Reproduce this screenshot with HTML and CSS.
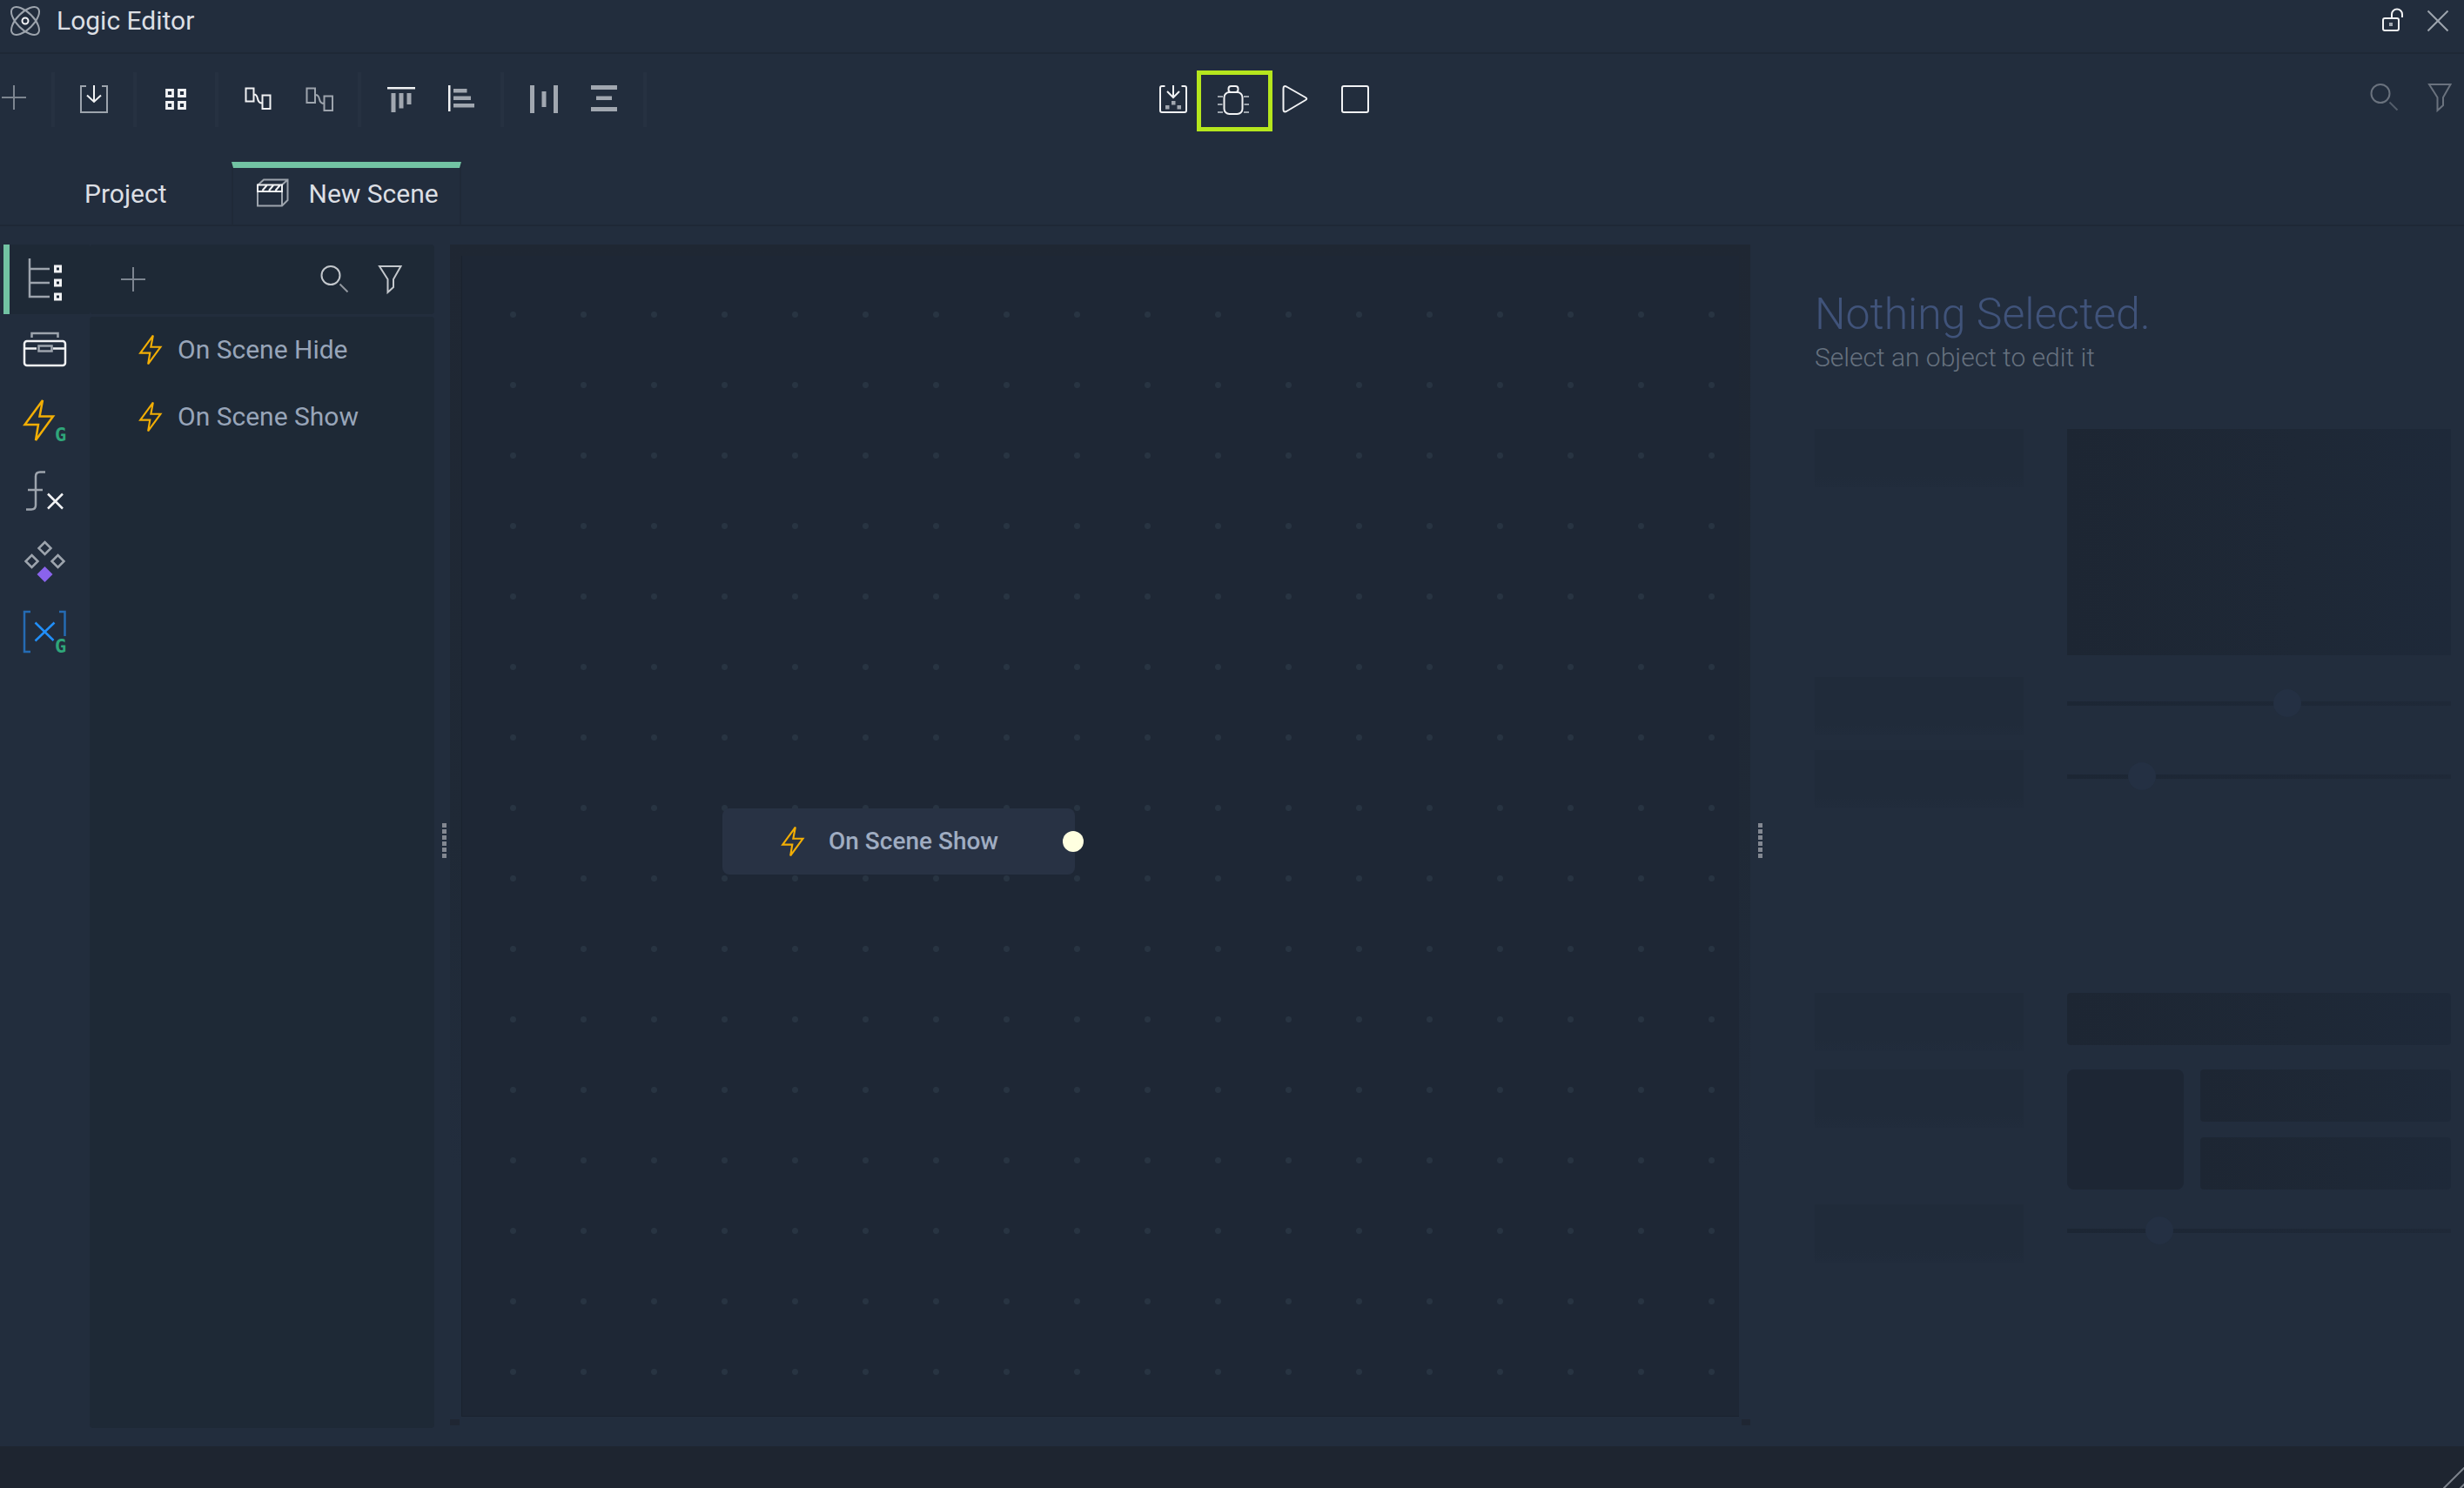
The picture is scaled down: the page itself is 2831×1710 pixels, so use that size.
FILE: index.html
```html
<!DOCTYPE html>
<html lang="en">
<head>
<meta charset="utf-8">
<title>Logic Editor</title>
<link rel="stylesheet" href="styles.css">
</head>
<body>
<svg class="symbols" aria-hidden="true">
  <symbol id="plus" viewBox="0 0 48 48"><path d="M10 24h28M24 10v28"/></symbol>
  <symbol id="search" viewBox="0 0 48 48"><circle cx="20" cy="19.500" r="10.500"/><path d="M30.500 29.500l9 9" opacity=".7"/></symbol>
  <symbol id="filter" viewBox="0 0 48 48"><path d="M12 9h24.500l-8.500 15v9l-6.500 6V24z"/></symbol>
  <symbol id="bolt" viewBox="0 0 56 56"><path d="M25 5L4.500 33H20l-3 18 20-27.500H21.500z"/></symbol>
</svg>

<div class="app">
  <header class="titlebar">
    <svg class="icon dim" viewBox="0 0 48 48" aria-hidden="true">
      <ellipse cx="24" cy="24" rx="20.500" ry="9.500" transform="rotate(45 24 24)"/>
      <ellipse cx="24" cy="24" rx="20.500" ry="9.500" transform="rotate(-45 24 24)"/>
      <circle class="lit" cx="24" cy="24" r="3.500"/>
    </svg>
    <h1 class="app-name">Logic Editor</h1>
    <div class="window-controls">
      <button class="win-button" type="button" aria-label="Unlock">
        <svg class="icon lit" viewBox="0 0 48 48"><rect x="13" y="21" width="18" height="14" rx="2"/><path d="M23 20v-3.500a6 6 0 0 1 12 0V20"/><rect class="solid-dim" x="20" y="26" width="4" height="4"/></svg>
      </button>
      <button class="win-button" type="button" aria-label="Close">
        <svg class="icon dim" viewBox="0 0 48 48"><path d="M12.500 12.500l23 23M35.500 12.500l-23 23"/></svg>
      </button>
    </div>
  </header>

  <div class="toolbar">
    <div class="tools tools-left">
      <button class="tool tool-add" type="button" aria-label="Add"><svg class="icon muted"><use href="#plus"/></svg></button>
      <span class="separator"></span>
      <button class="tool" type="button" aria-label="Import">
        <svg class="icon dim" viewBox="0 0 48 48"><path d="M15 8H9v30h30V8h-6"/><path class="lit" d="M24 7v19M16 18.500l8 7.500 8-7.500"/></svg>
      </button>
      <span class="separator"></span>
      <button class="tool" type="button" aria-label="Grid">
        <svg class="icon lit" viewBox="0 0 48 48"><path stroke-width="2.800" d="M13.500 12.500h7v7h-7zM27.500 12.500h7v7h-7zM13.500 26.500h7v7h-7zM27.500 26.500h7v7h-7z"/></svg>
      </button>
      <span class="separator"></span>
      <button class="tool" type="button" aria-label="Connect">
        <svg class="icon lit" viewBox="0 0 48 48"><path d="M10.500 10.500h9v15h-9zM29.500 18.500h9v15.500h-9zM20 17.500q3 0 4 5t5 5"/></svg>
      </button>
      <button class="tool" type="button" aria-label="Disconnect">
        <svg class="icon dim" viewBox="0 0 48 48"><path d="M10.500 10.500h9.500v16.500H10.500zM30.500 19.500H40V36h-9.500zM20.500 18q3.500 0 4.500 5t5.500 5"/></svg>
      </button>
      <span class="separator"></span>
      <button class="tool" type="button" aria-label="Align top">
        <svg class="icon solid" viewBox="0 0 48 48"><path class="solid-lit" d="M9 9h32v2.500H9z"/><path d="M13.500 16h5v22h-5zM22.500 16h5v17.500h-5zM31.500 16h5v13h-5z"/></svg>
      </button>
      <button class="tool" type="button" aria-label="Align left">
        <svg class="icon solid" viewBox="0 0 48 48"><path class="solid-lit" d="M9 7h2.500v30H9z"/><path d="M15 11h15.500v4.500H15zM15 19.500h20V24H15zM15 28h24v4.500H15z"/></svg>
      </button>
      <span class="separator"></span>
      <button class="tool" type="button" aria-label="Distribute horizontally">
        <svg class="icon solid" viewBox="0 0 48 48"><path d="M9 7h5v32H9zM22.500 14h5v18h-5zM36 7h5v32h-5z"/></svg>
      </button>
      <button class="tool" type="button" aria-label="Distribute vertically">
        <svg class="icon solid" viewBox="0 0 48 48"><path d="M9 7h30v5H9zM15 19.500h18V24H15zM9 32h30v5H9z"/></svg>
      </button>
      <span class="separator"></span>
    </div>
    <div class="tools">
      <button class="tool" type="button" aria-label="Build">
        <svg class="icon lit" viewBox="0 0 48 48"><path d="M14.500 8H11q-2 0-2 2v26q0 2 2 2h26q2 0 2-2V10q0-2-2-2h-3.500M24 7v13.500M17 14l7 7 7-7"/><path class="solid-dim" d="M22 25h4.500v4.500H22zM15 30h4.500v4.500H15zM28.500 30H33v4.500h-4.500z"/></svg>
      </button>
      <button class="tool tool-marked" type="button" aria-label="Debug">
        <svg class="icon lit" viewBox="0 0 48 48"><rect x="12.500" y="15" width="21" height="25" rx="6"/><rect x="17.500" y="8" width="11" height="7" rx="3"/><path class="dim" d="M5 20h6M5 29h5.500M5 38h6M35 20h6M35.500 29H41M35 38h6"/></svg>
      </button>
      <button class="tool" type="button" aria-label="Play">
        <svg class="icon lit" viewBox="0 0 48 48"><path stroke-linejoin="round" d="M10.500 11v23.500q0 4 3.500 2.500l22-13q2.500-1.500 0-3l-22-12.500q-3.500-1.500-3.500 2.500z"/></svg>
      </button>
      <button class="tool" type="button" aria-label="Stop">
        <svg class="icon lit" viewBox="0 0 48 48"><rect x="8" y="8" width="30" height="30" rx="2"/></svg>
      </button>
    </div>
    <div class="tools tools-right">
      <button class="tool tool-small" type="button" aria-label="Search"><svg class="icon faint"><use href="#search"/></svg></button>
      <button class="tool tool-small" type="button" aria-label="Filter"><svg class="icon faint"><use href="#filter"/></svg></button>
    </div>
  </div>

  <nav class="tabs">
    <a class="tab" href="#project">Project</a>
    <a class="tab tab-active" href="#scene" aria-current="page">
      <svg class="icon dim" viewBox="0 0 48 48" aria-hidden="true"><path d="M7 14l7-6.500h27.500V31L35 37.500H7V14M35 13.500l6.500-6M35 21v16.500"/><path class="lit" d="M7 13.500h28V21H7zM12.500 20l5-6M20 20l5-6M27.500 20l5-6"/></svg>
      New Scene
    </a>
  </nav>

  <main class="workspace">
    <nav class="rail" aria-label="Sections">
      <button class="rail-item rail-active" type="button" aria-label="Hierarchy">
        <svg class="rail-icon dim" viewBox="0 0 56 56"><path d="M10 4v44h23M10 16h23M10 32h23"/><path class="lit" stroke-width="3" d="M39.500 13h6v6h-6zM39.500 29h6v6h-6zM39.500 45h6v6h-6z"/></svg>
      </button>
      <button class="rail-item" type="button" aria-label="Toolbox">
        <svg class="rail-icon lit" viewBox="0 0 56 56"><rect x="4" y="18" width="47" height="28" rx="3"/><path d="M4 26.500h14M37 26.500h14"/><path class="dim" d="M20.500 23.500h15v6h-15zM12.500 14V9h30v5"/></svg>
      </button>
      <button class="rail-item" type="button" aria-label="Global events">
        <svg class="rail-icon" viewBox="0 0 56 56"><path class="amber" d="M25 5L4.500 33H20l-3 18 20-27.500H21.500z"/><text class="badge" x="39" y="52">G</text></svg>
      </button>
      <button class="rail-item" type="button" aria-label="Functions">
        <svg class="rail-icon dim" viewBox="0 0 56 56"><path d="M28 6.500h-6q-5 0-5 5v33q0 5-5 5H6M8 27h17"/><path class="lit" d="M31 31.500l17 17M48 31.500l-17 17"/></svg>
      </button>
      <button class="rail-item" type="button" aria-label="Components">
        <svg class="rail-icon dim" viewBox="0 0 56 56"><path d="M27.500 6l7 7-7 7-7-7zM12.500 21l7 7-7 7-7-7zM42.500 21l7 7-7 7-7-7z"/><path class="violet" d="M27.500 34l9 9-9 9-9-9z"/></svg>
      </button>
      <button class="rail-item" type="button" aria-label="Global variables">
        <svg class="rail-icon" viewBox="0 0 56 56"><path class="navy" d="M11 5H4v46h7M44 5h6.500v28"/><path class="azure" d="M16.500 17.500l21 20.500M38.500 17.500l-22 21"/><text class="badge" x="39" y="52">G</text></svg>
      </button>
    </nav>

    <section class="panel" aria-label="Events">
      <div class="panel-head">
        <button class="panel-tool" type="button" aria-label="Add event"><svg class="icon muted"><use href="#plus"/></svg></button>
        <div class="panel-tools">
          <button class="panel-tool" type="button" aria-label="Search events"><svg class="icon soft"><use href="#search"/></svg></button>
          <button class="panel-tool" type="button" aria-label="Filter events"><svg class="icon soft"><use href="#filter"/></svg></button>
        </div>
      </div>
      <ul class="event-list">
        <li class="event"><svg class="bolt amber" aria-hidden="true"><use href="#bolt"/></svg>On Scene Hide</li>
        <li class="event"><svg class="bolt amber" aria-hidden="true"><use href="#bolt"/></svg>On Scene Show</li>
      </ul>
    </section>

    <div class="splitter splitter-left"><span class="grip"></span></div>

    <section class="canvas-frame" aria-label="Graph">
      <div class="canvas">
        <div class="node">
          <svg class="bolt amber" aria-hidden="true"><use href="#bolt"/></svg>
          On Scene Show
          <span class="port"></span>
        </div>
      </div>
    </section>

    <div class="splitter splitter-right"><span class="grip"></span></div>

    <aside class="inspector">
      <h2 class="inspector-title">Nothing Selected.</h2>
      <p class="inspector-hint">Select an object to edit it</p>
      <div class="skeleton">
        <div class="skeleton-row row-preview"><span class="ghost-label"></span><span class="ghost-field ghost-preview"></span></div>
        <div class="skeleton-row"><span class="ghost-label"></span><input class="ghost-slider" type="range" value="58" disabled aria-label="Value"></div>
        <div class="skeleton-row"><span class="ghost-label"></span><input class="ghost-slider" type="range" value="17" disabled aria-label="Value"></div>
      </div>
      <div class="skeleton skeleton-second">
        <div class="skeleton-row row-field"><span class="ghost-label"></span><span class="ghost-field"></span></div>
        <div class="skeleton-row"><span class="ghost-label"></span>
          <div class="ghost-group"><span class="ghost-field ghost-tile"></span><span class="ghost-field"></span><span class="ghost-field"></span></div>
        </div>
        <div class="skeleton-row"><span class="ghost-label"></span><input class="ghost-slider" type="range" value="22" disabled aria-label="Value"></div>
      </div>
    </aside>
  </main>

  <footer class="statusbar">
    <svg class="resize" viewBox="0 0 24 24" aria-hidden="true"><path d="M0 25L25 0M19 25l6-6"/></svg>
  </footer>
</div>
</body>
</html>
```
FILE: styles.css
```css
* { box-sizing: border-box; }

body {
  margin: 0;
  background: #222d3d;
  color: #dcdfe4;
  font: 400 30px/40px Roboto, "Liberation Sans", sans-serif;
}

button {
  padding: 0;
  border: 0;
  background: none;
  color: inherit;
  font: inherit;
}

h1, h2, p, ul { margin: 0; padding: 0; }

.symbols { position: absolute; width: 0; height: 0; }

.app {
  display: flex;
  flex-direction: column;
  min-height: 100vh;
}

/* Icons */
.icon { display: block; flex: none; width: 48px; height: 48px; fill: none; stroke-width: 2; }
.rail-icon { display: block; width: 56px; height: 56px; fill: none; stroke-width: 2.5; }
.bolt { flex: none; width: 40px; height: 40px; fill: none; stroke-width: 3; }
.lit { stroke: #f1f2f4; }
.soft { stroke: #c3c7cc; }
.dim { stroke: #9da4ad; }
.muted { stroke: #7d8590; }
.faint { stroke: #6a727e; }
.solid { fill: #a1a7b0; }
.solid-lit { fill: #f1f2f4; }
.solid-dim { fill: #a1a7b0; stroke: none; }
.amber { stroke: #f2ae05; }
.violet { fill: #8a63ec; stroke: none; }
.navy { stroke: #256bb3; }
.azure { stroke: #218ffa; }
.badge { fill: #2fa67a; font: 700 22px "DejaVu Sans Mono", monospace; }

/* Title bar */
.titlebar {
  display: flex;
  align-items: center;
  gap: 12px;
  height: 62px;
  padding: 0 4px 12px 5px;
  border-bottom: 2px solid #1e2836;
}
.app-name { font-size: 30px; font-weight: 400; }
.window-controls { display: flex; margin-left: auto; }
.win-button { display: grid; place-items: center; width: 52px; height: 48px; }

/* Toolbar */
.toolbar { display: flex; height: 124px; padding-top: 21px; }
.tools { display: flex; align-items: flex-start; }
.tools-left { flex: 35 1 0; }
.tools-right { flex: 33 1 0; justify-content: flex-end; gap: 8px; }
.tool { display: grid; place-items: center; flex: none; width: 70px; height: 64px; }
.tool-add { width: 48px; height: 58px; margin: 0 9px 0 -8px; }
.tool-small { width: 56px; height: 58px; }
.separator { flex: none; width: 4px; height: 63px; margin: 0 10px; background: #263141; }
.tool-marked { position: relative; }
.tool-marked::after {
  content: "";
  position: absolute;
  inset: -2px -9px -4px -8px;
  border: 5px solid #b5e61d;
}

/* Tabs */
.tabs { display: flex; height: 74px; border-bottom: 2px solid #1e2836; }
.tab {
  display: flex;
  align-items: center;
  gap: 18px;
  padding: 7px 74px 6px 97px;
  color: inherit;
  text-decoration: none;
}
.tab-active {
  padding: 0 24px 6px 21px;
  border: solid #1f2938;
  border-width: 7px 2px 0;
  border-top-color: #72c3a3;
}

/* Workspace */
.workspace { display: flex; flex: 1; padding: 21px 0; }

.rail { display: flex; flex: none; flex-direction: column; gap: 1px; width: 103px; }
.rail-item { display: flex; align-items: center; height: 80px; padding-left: 24px; }
.rail-active {
  margin-left: 4px;
  padding-left: 13px;
  border-left: 7px solid #72c3a3;
  background: #1e2936;
}

.panel { display: flex; flex: none; flex-direction: column; gap: 3px; width: 396px; }
.panel-head {
  display: flex;
  align-items: center;
  justify-content: space-between;
  height: 80px;
  padding: 0 23px 0 22px;
  border-radius: 4px;
  background: #1e2936;
}
.panel-tools { display: flex; gap: 8px; }
.panel-tool { display: grid; place-items: center; width: 56px; height: 56px; }
.event-list { flex: 1; border-radius: 4px; background: #1e2936; list-style: none; }
.event { display: flex; align-items: center; gap: 6px; height: 77px; padding: 0 0 2px 55px; color: #98a5b9; }

.splitter { display: grid; flex: none; place-items: center; padding-top: 10px; }
.splitter-left { width: 18px; padding-left: 4px; }
.splitter-right { width: 22px; }
.grip {
  width: 5px;
  height: 40px;
  background: repeating-linear-gradient(#838892 0 5px, transparent 5px 7px);
}

.canvas-frame {
  display: flex;
  flex: 1;
  padding: 13px;
  background:
    linear-gradient(#1f2633, #1f2633) left 0 bottom 3px / 11px 7px no-repeat,
    linear-gradient(#1f2633, #1f2633) right 0 bottom 3px / 10px 7px no-repeat,
    linear-gradient(#1f2733, #1f2936 50%, #222d3d 78%);
}
.canvas {
  position: relative;
  flex: 1;
  border: solid #1a222e;
  border-width: 0 0 1px 1px;
  background: #1e2735 radial-gradient(circle, #283442 3px, transparent 4px) 18px 27px / 81px 81px;
}
.node {
  position: absolute;
  top: 635px;
  left: 299px;
  display: flex;
  align-items: center;
  gap: 16px;
  width: 405px;
  height: 76px;
  padding-left: 66px;
  border-radius: 8px;
  background: #283244;
  color: #9facc1;
  font-size: 28px;
  font-weight: 500;
}
.port {
  position: absolute;
  top: 26px;
  right: -10px;
  width: 24px;
  height: 24px;
  border-radius: 50%;
  background: #ffffe0;
}

/* Inspector */
.inspector { flex: none; width: 798px; padding: 50px 15px 0 52px; }
.inspector-title { color: #40537a; font-size: 50px; font-weight: 300; line-height: 60px; }
.inspector-hint { color: #66717f; font-weight: 300; }
.skeleton { display: flex; flex-direction: column; gap: 17px; margin-top: 62px; }
.skeleton-second { margin-top: 212px; }
.skeleton-row {
  display: grid;
  grid-template-columns: 240px 1fr;
  align-items: start;
  gap: 50px;
}
.row-preview { min-height: 268px; }
.row-field { min-height: 71px; }
.ghost-label { height: 67px; background: linear-gradient(#202b3a 80%, #212c3c); }
.ghost-field {
  height: 60px;
  border-radius: 4px;
  background: linear-gradient(90deg, #1d2633, #1e2836 60%, #1e2939);
}
.ghost-preview { height: 260px; border-radius: 0; }
.ghost-group { display: grid; grid-template-columns: 134px 1fr; gap: 18px 19px; }
.ghost-tile { grid-row: span 2; height: auto; border-radius: 8px; background: #1d2634; }
.ghost-slider {
  width: 100%;
  height: 60px;
  margin: 0;
  appearance: none;
  background: linear-gradient(90deg, #1c2634, #1f2938) center / 100% 5px no-repeat;
}
.ghost-slider::-webkit-slider-thumb {
  appearance: none;
  width: 32px;
  height: 32px;
  border-radius: 50%;
  background: #243043;
}

/* Status bar */
.statusbar {
  display: flex;
  align-items: flex-end;
  justify-content: flex-end;
  height: 48px;
  background: #1e2530;
}
.resize { width: 24px; height: 24px; fill: none; stroke: #7c828b; stroke-width: 2; }
```
